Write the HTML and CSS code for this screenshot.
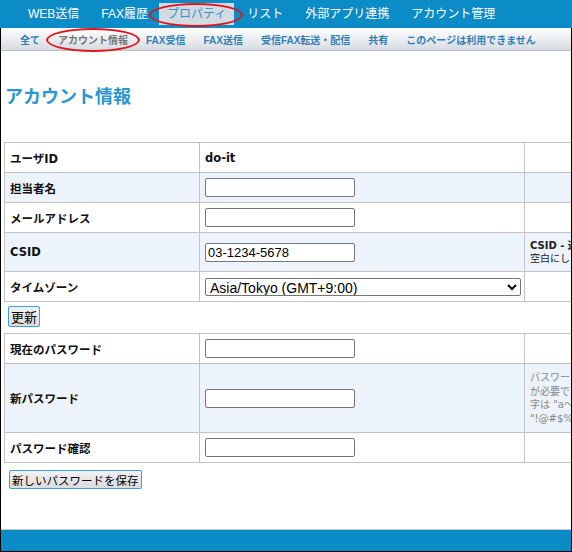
FILE: index.html
```html
<!DOCTYPE html>
<html lang="ja">
<head>
<meta charset="utf-8">
<title>アカウント情報</title>
<link rel="stylesheet" href="styles.css">
</head>
<body>
<nav class="topnav">
  <a class="tn-item">WEB送信</a>
  <a class="tn-item">FAX履歴</a>
  <a class="tn-item tn-active">プロパティ</a>
  <a class="tn-item">リスト</a>
  <a class="tn-item">外部アプリ連携</a>
  <a class="tn-item">アカウント管理</a>
</nav>
<div class="page">
  <div class="subnav">
    <a class="sn-item">全て</a>
    <a class="sn-item sn-active">アカウント情報</a>
    <a class="sn-item">FAX受信</a>
    <a class="sn-item">FAX送信</a>
    <a class="sn-item">受信FAX転送・配信</a>
    <a class="sn-item">共有</a>
    <a class="sn-item">このページは利用できません</a>
  </div>
  <main class="content">
    <h1 class="title">アカウント情報</h1>
    <table class="form-table">
      <colgroup><col class="c1"><col class="c2"><col class="c3"></colgroup>
      <tr class="row"><th class="lbl">ユーザID</th><td class="val bold">do-it</td><td class="note"></td></tr>
      <tr class="row alt"><th class="lbl">担当者名</th><td class="val"><input class="txt" type="text"></td><td class="note"></td></tr>
      <tr class="row"><th class="lbl">メールアドレス</th><td class="val"><input class="txt" type="text"></td><td class="note"></td></tr>
      <tr class="row alt tall1"><th class="lbl">CSID</th><td class="val"><input class="txt" type="text" value="03-1234-5678"></td><td class="note dark"><b>CSID - 送信元識別子</b><br>空白にした場合は表示されません</td></tr>
      <tr class="row"><th class="lbl">タイムゾーン</th><td class="val"><select class="sel"><option>Asia/Tokyo (GMT+9:00)</option></select></td><td class="note"></td></tr>
    </table>
    <button class="btn btn-update">更新</button>
    <table class="form-table">
      <colgroup><col class="c1"><col class="c2"><col class="c3"></colgroup>
      <tr class="row"><th class="lbl">現在のパスワード</th><td class="val"><input class="txt" type="password"></td><td class="note"></td></tr>
      <tr class="row alt tall2"><th class="lbl">新パスワード</th><td class="val"><input class="txt" type="password"></td><td class="note gray">パスワードは8文字以上<br>が必要です。使用できる文<br>字は "a～z" "A～Z" "0～9"<br>"!@#$%^&amp;*" です。</td></tr>
      <tr class="row"><th class="lbl">パスワード確認</th><td class="val"><input class="txt" type="password"></td><td class="note"></td></tr>
    </table>
    <button class="btn btn-save">新しいパスワードを保存</button>
  </main>
  <footer class="footer"></footer>
</div>
<span class="mark mark-prop"></span>
<span class="mark mark-acct"></span>
</body>
</html>
```
FILE: styles.css
```css
html, body {
  margin: 0;
  padding: 0;
  width: 572px;
  height: 552px;
  overflow: hidden;
  background: #fff;
  font-family: "Liberation Sans", "Noto Sans CJK JP", sans-serif;
}
body {
  position: relative;
  display: flex;
  flex-direction: column;
}
.topnav {
  height: 28px;
  background: #0b8cc6;
  display: flex;
  align-items: flex-start;
  padding-left: 17px;
  box-sizing: border-box;
  flex-shrink: 0;
}
.tn-item {
  color: #fff;
  font-size: 12px;
  line-height: 22px;
  height: 22px;
  margin-top: 3px;
  padding: 0 11px;
  white-space: nowrap;
}
.tn-active {
  background: #d3dbe2;
  color: #3a8fc8;
  padding: 0 8px;
  margin: 3px 2px 0 0;
}
.page {
  flex: 1;
  display: flex;
  flex-direction: column;
  border: 1px solid #000;
  border-top: none;
  overflow: hidden;
  min-height: 0;
}
.subnav {
  height: 22px;
  background: linear-gradient(#ffffff, #d6dce1);
  border-bottom: 1px solid #b9bec2;
  display: flex;
  align-items: center;
  padding-left: 19px;
  gap: 18px;
  flex-shrink: 0;
}
.sn-item {
  font-size: 10px;
  font-weight: bold;
  color: #2f80b8;
  white-space: nowrap;
}
.sn-active {
  color: #777;
}
.content {
  flex: 1;
  padding-left: 3px;
  min-height: 0;
}
.title {
  margin: 31px 0 0 1px;
  height: 60px;
  font-size: 18px;
  line-height: 26px;
  font-weight: bold;
  color: #2b97cf;
  font-family: "Noto Sans CJK JP", sans-serif;
}
.form-table {
  border-collapse: collapse;
  table-layout: fixed;
  width: 720px;
  font-family: "DejaVu Sans", "Noto Sans CJK JP", sans-serif;
}
.c1 { width: 195px; }
.c2 { width: 325px; }
.c3 { width: 200px; }
.row td, .row th {
  border: 1px solid #c3c3c3;
  height: 29px;
  padding: 0 5px;
  text-align: left;
  vertical-align: middle;
}
.row.alt td, .row.alt th {
  background: #ecf3fa;
}
.row.tall1 td, .row.tall1 th { height: 38px; }
.row.tall2 td, .row.tall2 th { height: 68px; }
.lbl {
  font-size: 11.5px;
  font-weight: bold;
  color: #111;
}
.bold {
  font-size: 11.5px;
  font-weight: bold;
  color: #111;
}
.txt {
  width: 150px;
  height: 19px;
  box-sizing: border-box;
  border: 1px solid #767676;
  border-radius: 2px;
  font-family: "Liberation Sans", sans-serif;
  font-size: 13px;
  padding: 0 2px;
  margin: 0;
  display: block;
}
.sel {
  width: 316px;
  height: 18px;
  box-sizing: border-box;
  border: 1px solid #767676;
  border-radius: 2px;
  font-family: "Liberation Sans", sans-serif;
  font-size: 14px;
  padding: 0;
  margin: 0;
  display: block;
  background: #fff;
  color: #000;
}
.note {
  font-size: 10px;
  line-height: 13.5px;
  white-space: nowrap;
  overflow: hidden;
}
.note.dark { color: #222; }
.note.gray { color: #888; }
.btn {
  display: block;
  font-family: "Noto Sans CJK JP", sans-serif;
  font-size: 13px;
  line-height: 16px;
  color: #000;
  background: linear-gradient(#f2f2f2, #dcdcdc);
  border: 1px solid #3aa0e0;
  border-radius: 2px;
  padding: 1px 2px;
}
.btn-update {
  margin: 4px 0 6px 4px;
  height: 21px;
}
.btn-save {
  margin: 7px 0 0 5px;
  height: 19px;
  padding: 0 2px;
  font-size: 11.5px;
}
.footer {
  height: 21px;
  background: #0a8bc6;
  border-top: 1px solid #c9c9c9;
  flex-shrink: 0;
}
.mark {
  position: absolute;
  border: 2px solid #e0161c;
  border-radius: 50%;
  box-sizing: border-box;
  pointer-events: none;
}
.mark-prop {
  left: 149px;
  top: 3px;
  width: 94px;
  height: 24px;
}
.mark-acct {
  left: 46px;
  top: 28px;
  width: 94px;
  height: 24px;
}
```
